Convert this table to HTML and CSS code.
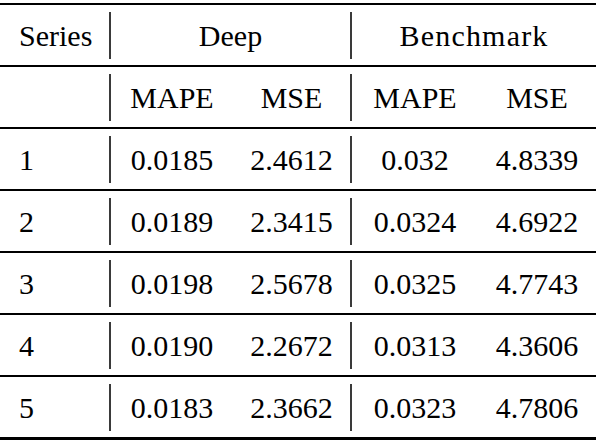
FILE: index.html
```html
<!DOCTYPE html>
<html lang="en">
<head>
    <meta charset="UTF-8">
    <title>Series results</title>
    <link rel="stylesheet" href="styles.css">
</head>
<body>
<div class="results">
    <div class="row head">
        <div class="cell label">Series</div>
        <div class="cell bar span">Deep</div>
        <div class="cell bar span wide">Benchmark</div>
    </div>
    <div class="row">
        <div class="cell label"></div>
        <div class="cell bar">MAPE</div>
        <div class="cell">MSE</div>
        <div class="cell bar">MAPE</div>
        <div class="cell">MSE</div>
    </div>
    <div class="row">
        <div class="cell label">1</div>
        <div class="cell bar">0.0185</div>
        <div class="cell">2.4612</div>
        <div class="cell bar">0.032</div>
        <div class="cell">4.8339</div>
    </div>
    <div class="row">
        <div class="cell label">2</div>
        <div class="cell bar">0.0189</div>
        <div class="cell">2.3415</div>
        <div class="cell bar">0.0324</div>
        <div class="cell">4.6922</div>
    </div>
    <div class="row">
        <div class="cell label">3</div>
        <div class="cell bar">0.0198</div>
        <div class="cell">2.5678</div>
        <div class="cell bar">0.0325</div>
        <div class="cell">4.7743</div>
    </div>
    <div class="row">
        <div class="cell label">4</div>
        <div class="cell bar">0.0190</div>
        <div class="cell">2.2672</div>
        <div class="cell bar">0.0313</div>
        <div class="cell">4.3606</div>
    </div>
    <div class="row last">
        <div class="cell label">5</div>
        <div class="cell bar">0.0183</div>
        <div class="cell">2.3662</div>
        <div class="cell bar">0.0323</div>
        <div class="cell">4.7806</div>
    </div>
</div>
</body>
</html>
```

FILE: styles.css
```css
body {
    margin: 0;
    background: #fff;
    color: #000;
    font-family: "Liberation Serif", "DejaVu Serif", serif;
    font-size: 30px;
}
.results {
    width: 596px;
    padding-top: 3px;
}
.row {
    display: grid;
    grid-template-columns: 109px 124px 117px 128px 118px;
    padding: 7px 0 6px;
    box-sizing: border-box;
    border-bottom: 2px solid #000;
    height: 62px;
}
.row.head {
    border-top: 2px solid #000;
    height: 64px;
}
.row.last {
    border-bottom-width: 3px;
    height: 63px;
}
.cell {
    display: flex;
    align-items: center;
    justify-content: center;
    line-height: 1;
}
.cell.label {
    justify-content: flex-start;
    padding-left: 19px;
}
.bar {
    border-left: 2px solid #3a3a3a;
}
.span {
    grid-column: 2 / 4;
}
.span.wide {
    grid-column: 4 / 6;
    letter-spacing: 1.2px;
}
```
